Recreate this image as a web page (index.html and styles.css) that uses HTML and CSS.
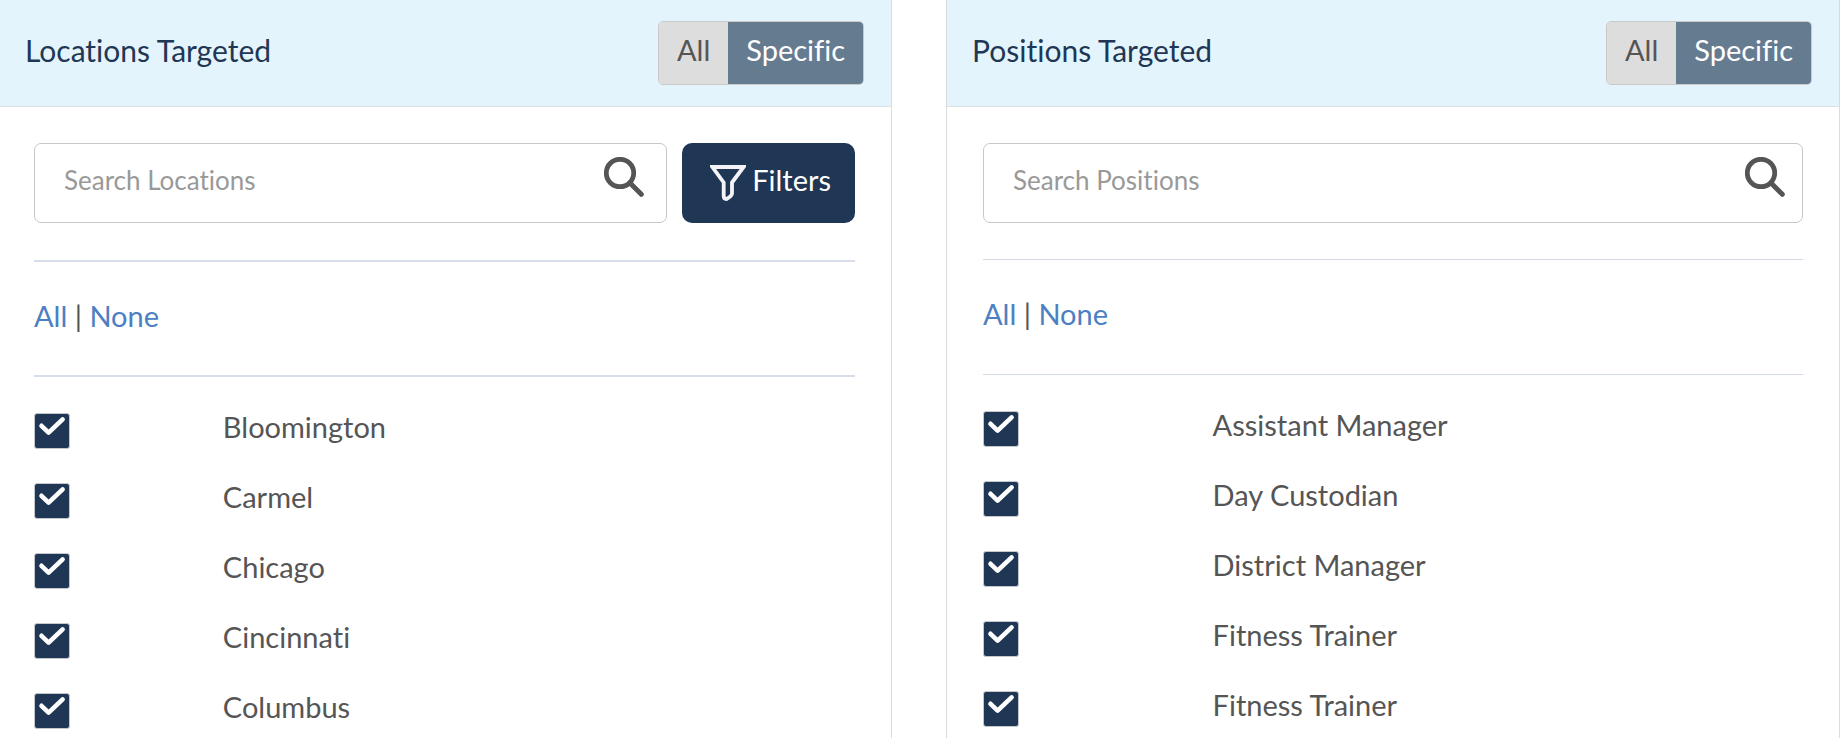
FILE: index.html
```html
<!DOCTYPE html>
<html lang="en">
<head>
<meta charset="utf-8">
<title>Targeting</title>
<link rel="stylesheet" href="styles.css">
</head>
<body>
<svg class="defs" width="0" height="0" aria-hidden="true">
  <symbol id="search" viewBox="0 0 40 40">
    <circle cx="16" cy="16" r="13.7" fill="none" stroke="currentColor" stroke-width="4.8"/>
    <path d="M26 26 37.3 37.3" fill="none" stroke="currentColor" stroke-width="5" stroke-linecap="round"/>
  </symbol>
  <symbol id="check" viewBox="0 0 36 36">
    <path d="M7.5 12.8 14.6 19.6 28.6 6.4" fill="none" stroke="#fff" stroke-width="4.6" stroke-linecap="round" stroke-linejoin="round"/>
  </symbol>
</svg>
<main class="targeting">
  <section class="panel panel-locations" aria-labelledby="locations-title">
    <header class="panel-header">
      <h2 class="panel-title" id="locations-title">Locations Targeted</h2>
      <div class="toggle">
        <button class="toggle-option" type="button">All</button>
        <button class="toggle-option toggle-active" type="button">Specific</button>
      </div>
    </header>
    <div class="panel-body">
      <div class="search-row">
        <div class="search-box">
          <input class="search-input" type="text" placeholder="Search Locations" aria-label="Search Locations">
          <button class="search-button" type="button" aria-label="Search"><svg class="search-icon"><use href="#search"/></svg></button>
        </div>
        <button class="filters" type="button">
          <svg class="filters-icon" viewBox="0 0 36 36" aria-hidden="true">
            <path d="M2.4 2H33.6L22 17.5V28.5Q21.5 31.5 16.5 34Q13.7 34 13.7 31V17.5Z" fill="none" stroke="#f4f4f8" stroke-width="3.8" stroke-linejoin="miter"/>
          </svg>
          Filters
        </button>
      </div>
      <div class="select-row"><a class="link" href="#all">All</a> | <a class="link" href="#none">None</a></div>
      <div class="options">
        <label class="option"><span class="tick"><input class="tick-input" type="checkbox" checked><svg class="tick-mark"><use href="#check"/></svg></span><span>Bloomington</span></label>
        <label class="option"><span class="tick"><input class="tick-input" type="checkbox" checked><svg class="tick-mark"><use href="#check"/></svg></span><span>Carmel</span></label>
        <label class="option"><span class="tick"><input class="tick-input" type="checkbox" checked><svg class="tick-mark"><use href="#check"/></svg></span><span>Chicago</span></label>
        <label class="option"><span class="tick"><input class="tick-input" type="checkbox" checked><svg class="tick-mark"><use href="#check"/></svg></span><span>Cincinnati</span></label>
        <label class="option"><span class="tick"><input class="tick-input" type="checkbox" checked><svg class="tick-mark"><use href="#check"/></svg></span><span>Columbus</span></label>
      </div>
    </div>
  </section>
  <section class="panel panel-positions" aria-labelledby="positions-title">
    <header class="panel-header">
      <h2 class="panel-title" id="positions-title">Positions Targeted</h2>
      <div class="toggle">
        <button class="toggle-option" type="button">All</button>
        <button class="toggle-option toggle-active" type="button">Specific</button>
      </div>
    </header>
    <div class="panel-body">
      <div class="search-row">
        <div class="search-box">
          <input class="search-input" type="text" placeholder="Search Positions" aria-label="Search Positions">
          <button class="search-button" type="button" aria-label="Search"><svg class="search-icon"><use href="#search"/></svg></button>
        </div>
      </div>
      <div class="select-row"><a class="link" href="#all">All</a> | <a class="link" href="#none">None</a></div>
      <div class="options">
        <label class="option"><span class="tick"><input class="tick-input" type="checkbox" checked><svg class="tick-mark"><use href="#check"/></svg></span><span>Assistant Manager</span></label>
        <label class="option"><span class="tick"><input class="tick-input" type="checkbox" checked><svg class="tick-mark"><use href="#check"/></svg></span><span>Day Custodian</span></label>
        <label class="option"><span class="tick"><input class="tick-input" type="checkbox" checked><svg class="tick-mark"><use href="#check"/></svg></span><span>District Manager</span></label>
        <label class="option"><span class="tick"><input class="tick-input" type="checkbox" checked><svg class="tick-mark"><use href="#check"/></svg></span><span>Fitness Trainer</span></label>
        <label class="option"><span class="tick"><input class="tick-input" type="checkbox" checked><svg class="tick-mark"><use href="#check"/></svg></span><span>Fitness Trainer</span></label>
      </div>
    </div>
  </section>
</main>
</body>
</html>
```
FILE: styles.css
```css
* {
  box-sizing: border-box;
}

body {
  margin: 0;
  background: #fff;
  color: #555;
  font-family: Lato, "Open Sans", sans-serif;
  font-size: 29px;
  font-variant-ligatures: none;
  line-height: 36px;
}

button,
input {
  font: inherit;
  font-variant-ligatures: none;
}

.defs {
  position: absolute;
}

.targeting {
  display: grid;
  grid-template-columns: 892fr 894fr;
  gap: 54px;
  min-height: 100vh;
}

.panel {
  border-right: 1px solid #d9dbdd;
}

.panel-positions {
  border-left: 1px solid #d9dbdd;
}

.panel-header {
  display: flex;
  align-items: flex-start;
  justify-content: space-between;
  padding: 21px 27px 21px 25px;
  border-bottom: 1px solid #dbe0e3;
  background: #e3f4fc;
}

.panel-title {
  margin: 0;
  padding-top: 11px;
  color: #1f3754;
  font-size: 30px;
  font-weight: 400;
}

.toggle {
  display: flex;
  border: 1px solid #c9c9c9;
  border-radius: 5px;
  overflow: hidden;
}

.toggle-option {
  padding: 10px 18px 16px;
  border: 0;
  background: #ddd;
  color: #555;
}

.toggle-active {
  background: #657b90;
  color: #fff;
}

.panel-body {
  padding: 36px 36px 0;
}

.panel-locations .panel-body {
  padding-left: 34px;
}

.search-row {
  display: flex;
  gap: 15px;
}

.search-box {
  display: flex;
  flex: 1;
  align-items: flex-start;
  height: 80px;
  padding: 0 17px 0 29px;
  border: 1px solid #c8c8c8;
  border-radius: 7px;
}

.panel-locations .search-box {
  padding-right: 22px;
}

.search-input {
  flex: 1;
  min-width: 0;
  padding: 18px 0 24px;
  border: 0;
  outline: 0;
  background: none;
  color: #555;
  font-size: 26px;
}

.search-input::placeholder {
  color: #999;
  opacity: 1;
}

.search-button {
  margin-top: 13px;
  padding: 0;
  border: 0;
  background: none;
  color: #555;
}

.search-icon {
  display: block;
  width: 40px;
  height: 40px;
}

.filters {
  display: flex;
  gap: 6px;
  padding: 19px 24px 22px 28px;
  border: 0;
  border-radius: 10px;
  background: #1f3754;
  color: #fff;
}

.filters-icon {
  width: 36px;
  height: 36px;
  margin-top: 3px;
}

.select-row {
  margin-top: 36px;
  padding: 36px 0 42px;
  border: solid #d5dbe5;
  border-width: 1px 0;
}

.panel-locations .select-row {
  margin-top: 37px;
  padding-bottom: 41px;
  border-color: #d7dde9;
  border-width: 2px 0;
}

.link {
  color: #4c80c2;
  text-decoration: none;
}

.options {
  padding-top: 32px;
}

.option {
  display: grid;
  grid-template-columns: 28% 1fr;
  height: 70px;
}

.panel-locations .option {
  grid-template-columns: 23% 1fr;
}

.tick {
  display: grid;
  width: 36px;
  height: 36px;
  margin-top: 4px;
}

.tick-input,
.tick-mark {
  grid-area: 1 / 1;
  width: 36px;
  height: 36px;
  margin: 0;
}

.tick-input {
  appearance: none;
  border: 1px solid #c4c8cc;
  border-radius: 3px;
  background: #1f3754;
}

.tick-mark {
  pointer-events: none;
}
```
